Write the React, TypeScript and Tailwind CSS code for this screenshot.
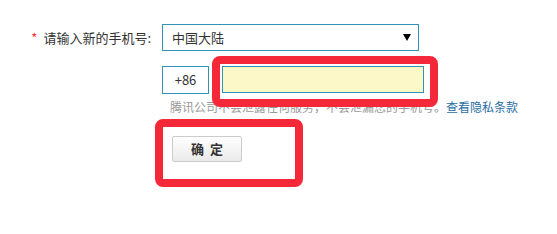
export default function App() {
  return (
    <div className="relative w-[557px] h-[234px] bg-white font-['Microsoft_YaHei','Noto_Sans_CJK_SC',sans-serif] text-[13px] text-[#333]">
      <div className="pt-[24px]">
        <div className="flex items-center h-[27px]">
          <div className="w-[162px] pr-[11px] flex justify-end items-center">
            <span className="text-[#f33] mr-[6px]">*</span>
            <span>请输入新的手机号:</span>
          </div>
          <div className="w-[257px] h-[27px] border border-[#2f92b6] flex items-center justify-between pl-[9px] pr-[7px]">
            <span>中国大陆</span>
            <svg width="8" height="7" viewBox="0 0 8 7">
              <path d="M0 0H8L4 7Z" fill="#000" />
            </svg>
          </div>
        </div>
        <div className="flex items-start mt-[15px] pl-[162px]">
          <div className="w-[47px] h-[28px] border border-[#2f92b6] flex items-center justify-center">
            +86
          </div>
          <div className="ml-[13px] w-[202px] h-[27px] border border-[#2f92b6] bg-[#fcf8c8]"></div>
        </div>
        <div className="pl-[170px] mt-[5px] leading-[16px] text-[12px] text-[#999]">
          腾讯公司不会泄露任何服务，不会泄漏您的手机号。
          <span className="text-[#2a6ea6]">查看隐私条款</span>
        </div>
        <div className="pl-[172px] mt-[21px]">
          <button className="w-[70px] h-[26px] border border-[#ccc] rounded-[2px] bg-gradient-to-b from-white to-[#eaeaea] font-bold text-[#333] tracking-[6px] pl-[6px]">
            确定
          </button>
        </div>
      </div>
      <div className="absolute left-[212px] top-[56px] w-[226px] h-[51px] border-[8px] border-[#f5283a] rounded-[8px]"></div>
      <div className="absolute left-[155px] top-[119px] w-[148px] h-[68px] border-[8px] border-[#f5283a] rounded-[8px]"></div>
    </div>
  );
}
